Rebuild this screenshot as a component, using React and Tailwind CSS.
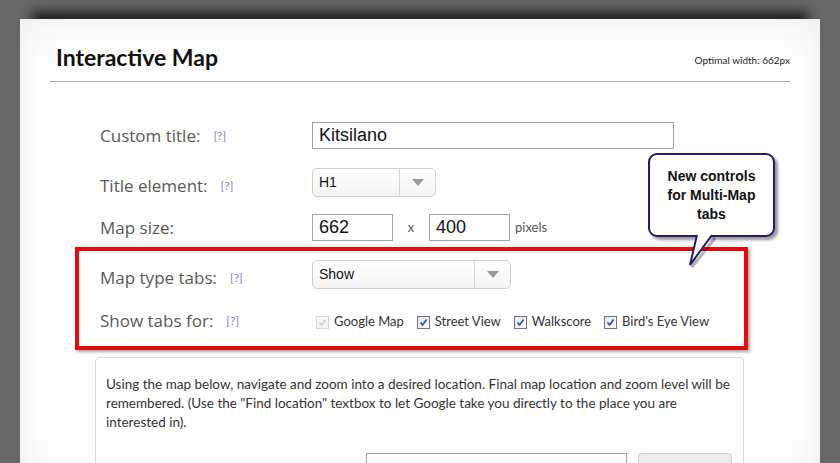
import React from "react";

const labelFont = { fontFamily: "Lato, 'Open Sans', sans-serif" };

function Help() {
  return <span className="ml-[13px] text-[12px] text-[#8a80c6]">[?]</span>;
}

function Label({ children, help = true }) {
  return (
    <div className="w-[212px] flex items-center text-[17px] text-[#585858]">
      <span className="font-['Open_Sans',Lato,sans-serif]">{children}</span>
      {help && <Help />}
    </div>
  );
}

function Select({ value, width, arrowWidth }) {
  return (
    <div
      className="h-[29px] flex rounded-[5px] border border-[#cfcfcf] bg-gradient-to-b from-white to-[#f3f3f3] font-['Liberation_Sans',Arial,sans-serif] text-[14px] text-[#111]"
      style={{ width }}
    >
      <div className="flex-1 flex items-center pl-[6px]">{value}</div>
      <div
        className="border-l border-[#d6d6d6] flex items-center justify-center"
        style={{ width: arrowWidth }}
      >
        <svg width="12" height="7" viewBox="0 0 12 7">
          <path d="M0 0h12L6 7z" fill="#9a9a9a" />
        </svg>
      </div>
    </div>
  );
}

function Check({ label, disabled }) {
  return (
    <label className="flex items-center mr-[13px]">
      <span
        className={
          disabled
            ? "w-[13px] h-[13px] border border-[#d8d8d8] bg-[#f6f6f6] flex items-center justify-center"
            : "w-[13px] h-[13px] border border-[#6f7480] bg-gradient-to-br from-[#e4e8f0] to-[#fbfcff] flex items-center justify-center"
        }
      >
        <svg width="9" height="9" viewBox="0 0 9 9">
          <path
            d="M1.5 4.5 L3.6 7 L7.6 1.6"
            fill="none"
            stroke={disabled ? "#cfcfcf" : "#2c4f9e"}
            strokeWidth="1.7"
          />
        </svg>
      </span>
      <span className="ml-[5px] text-[13px] text-[#333]">{label}</span>
    </label>
  );
}

export default function App() {
  return (
    <div
      className="relative h-[463px] w-[840px] overflow-hidden bg-[#676767] pt-[19px] pl-[20px]"
      style={labelFont}
    >
      <div className="w-[800px] h-[460px] bg-white shadow-[0_-20px_10px_-12px_rgba(0,0,0,0.65),inset_0_0_40px_rgba(0,0,0,0.08)] pl-[30px]">
        {/* header */}
        <div className="w-[740px] h-[63px] border-b border-[#a9a9a9] flex items-end justify-between pb-[12px]">
          <h1 className="pl-[6px] text-[23px] font-bold text-[#111] leading-none">
            Interactive Map
          </h1>
          <span className="text-[10px] text-[#222] pb-[1px]">Optimal width: 662px</span>
        </div>

        {/* form rows */}
        <div className="pl-[50px] mt-[40px]">
          <div className="h-[27px] flex items-center">
            <Label>Custom title:</Label>
            <div className="w-[362px] h-[27px] border border-[#a3a3a3] flex items-center pl-[6px] font-['Liberation_Sans',Arial,sans-serif] text-[18px] text-[#111]">
              Kitsilano
            </div>
          </div>

          <div className="h-[29px] mt-[19px] flex items-center">
            <div className="pt-[7px]">
              <Label>Title element:</Label>
            </div>
            <Select value="H1" width={124} arrowWidth={36} />
          </div>

          <div className="h-[27px] mt-[17px] flex items-center">
            <Label help={false}>Map size:</Label>
            <div className="w-[81px] h-[27px] border border-[#a3a3a3] flex items-center pl-[6px] font-['Liberation_Sans',Arial,sans-serif] text-[18px] text-[#111]">
              662
            </div>
            <span className="w-[36px] text-center text-[13px] text-[#555]">x</span>
            <div className="w-[81px] h-[27px] border border-[#a3a3a3] flex items-center pl-[6px] font-['Liberation_Sans',Arial,sans-serif] text-[18px] text-[#111]">
              400
            </div>
            <span className="ml-[5px] text-[13px] text-[#555]">pixels</span>
          </div>
        </div>

        {/* highlighted block */}
        <div className="ml-[25px] mt-[6px] w-[673px] border-4 border-[#e50b0b] shadow-[2px_2px_3px_rgba(0,0,0,0.35)] pl-[21px] pt-[9px] pb-[15px]">
          <div className="h-[29px] flex items-center">
            <div className="pt-[7px]">
              <Label>Map type tabs:</Label>
            </div>
            <Select value="Show" width={199} arrowWidth={36} />
          </div>
          <div className="h-[20px] mt-[22px] flex items-center">
            <Label>Show tabs for:</Label>
            <div className="flex items-center pl-[4px] pt-[2px]">
              <Check label="Google Map" disabled />
              <Check label="Street View" />
              <Check label="Walkscore" />
              <Check label="Bird's Eye View" />
            </div>
          </div>
        </div>

        {/* map instructions */}
        <div className="ml-[45px] mt-[7px] w-[649px] h-[120px] border border-[#dcdcdc] rounded-[4px] pl-[10px] pt-[17px]">
          <p className="text-[13.5px] leading-[19px] text-[#333] whitespace-nowrap">
            Using the map below, navigate and zoom into a desired location. Final map location and zoom level will be
            <br />
            remembered. (Use the "Find location" textbox to let Google take you directly to the place you are
            <br />
            interested in).
          </p>
          <div className="mt-[21px] flex items-start">
            <div className="ml-[260px] w-[261px] h-[26px] border border-[#a3a3a3]" />
            <div className="ml-[11px] w-[94px] h-[26px] rounded-[4px] border border-[#d0d0d0] bg-[#ececec] text-center text-[12px] text-[#999] pt-[6px]">
              Find location
            </div>
          </div>
        </div>
      </div>

      {/* callout */}
      <div className="absolute left-[648px] top-[153px] w-[127px] h-[84px] rounded-[9px] border-2 border-[#1d1d6e] bg-white shadow-[3px_3px_3px_rgba(0,0,0,0.4)] flex items-center justify-center text-center font-['Liberation_Sans',Arial,sans-serif] font-bold text-[14px] leading-[19px] text-[#111]">
        New controls
        <br />
        for Multi-Map
        <br />
        tabs
      </div>
      <svg
        className="absolute left-[684px] top-[232px]"
        width="34"
        height="36"
        viewBox="0 0 34 36"
      >
        <path d="M16 6 L8 35 L31 6" fill="none" stroke="rgba(0,0,0,0.3)" strokeWidth="3" />
        <path d="M13 0 L13 4 L6 33 L28 4 L28 0 Z" fill="white" />
        <path d="M13 3 L6 33 L28 3" fill="none" stroke="#1d1d6e" strokeWidth="2" />
      </svg>
    </div>
  );
}
